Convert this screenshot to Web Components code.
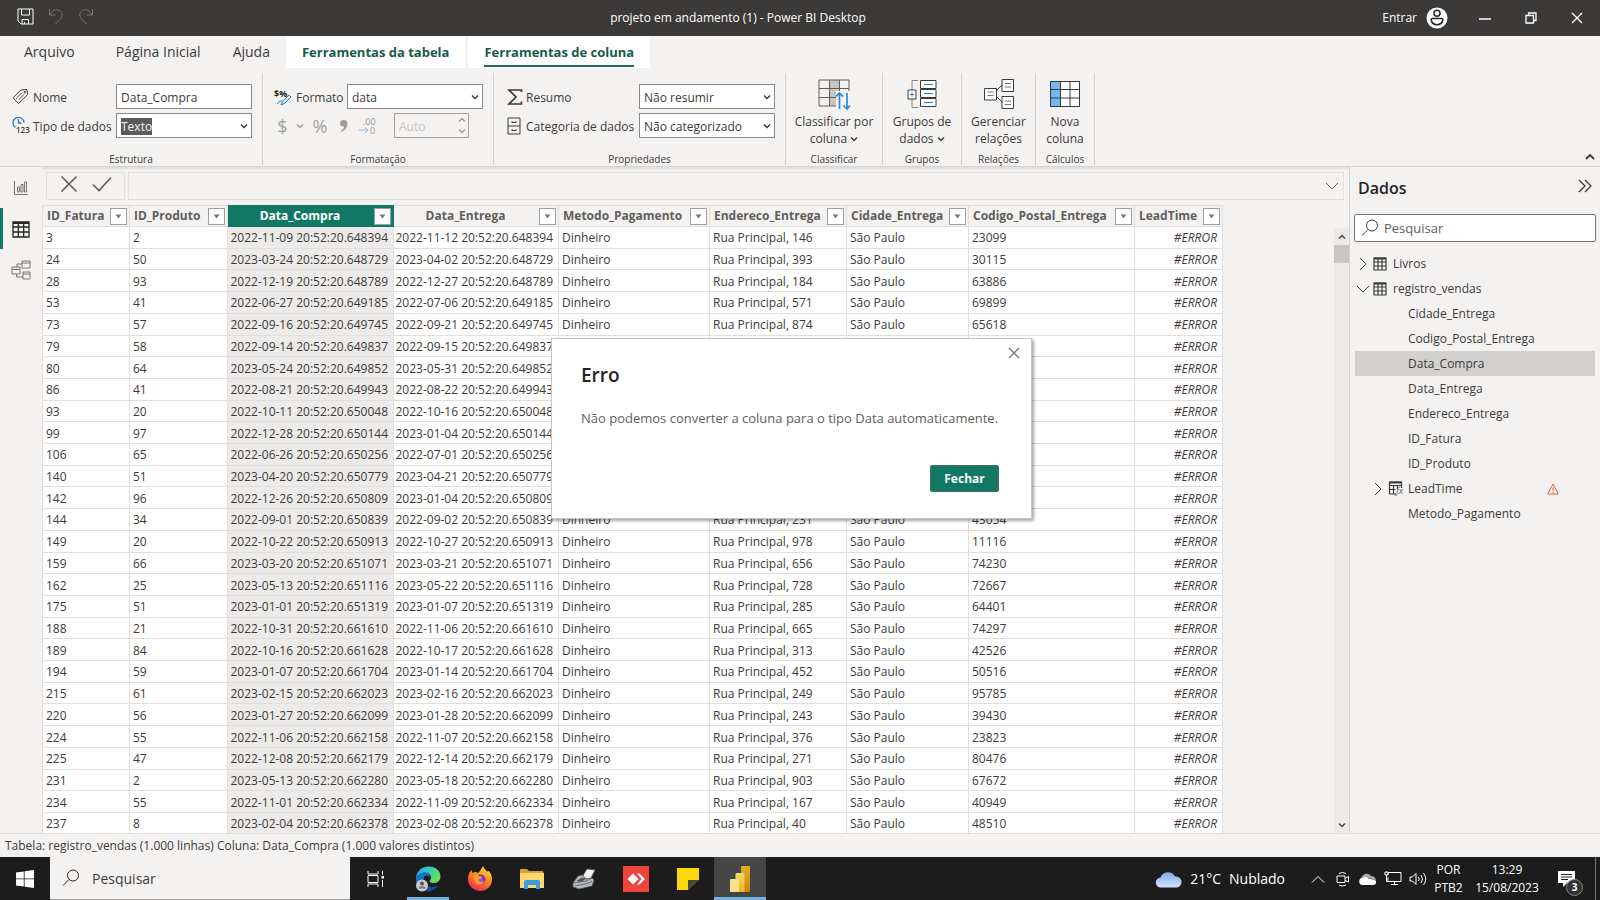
<!DOCTYPE html>
<html lang="pt-BR">
<head>
<meta charset="utf-8">
<meta name="viewport" content="width=device-width, initial-scale=1">
<title>projeto em andamento (1) - Power BI Desktop</title>
<style>
html, body { height: 100%; margin: 0; }
body {
  font: 12px/16px "Open Sans", "Noto Sans", sans-serif;
  color: #3b3a39; background: #f3f2f1; overflow: hidden;
  --green: #117865; --line: #e1dfdd; --field: #8a8886;
}
</style>
</head>
<body>
<desktop-screen></desktop-screen>
<script>
const RESET = `
*, *::before, *::after { box-sizing: border-box; }
button, input, select { font: inherit; color: inherit; margin: 0; }
button { background: none; border: 0; padding: 0; }
input:focus, select:focus, button:focus { outline: none; }
`;

function define(tag, css, html, setup) {
  const tpl = document.createElement('template');
  tpl.innerHTML = `<style>${RESET}${css}</style>${html}`;
  customElements.define(tag, class extends HTMLElement {
    constructor() {
      super();
      this.attachShadow({ mode: 'open' }).appendChild(tpl.content.cloneNode(true));
    }
    connectedCallback() {
      if (setup && !this.ready) { this.ready = true; setup(this, this.shadowRoot); }
    }
  });
}

/* name: [width, height, drawing] */
const ICONS = {
  save: [17, 17, '<path d="M1 1h15v15H4l-3-3zM4.500 1v6h8V1M5 16v-4.500h6.500V16M7.500 16v-2"/>'],
  undo: [16, 17, '<path d="M1.500 1v6h6M1.500 7C4 2.500 8 .5 11.500 2.500c4 2.500 3 6.500.5 9L7.500 16"/>'],
  redo: [16, 17, '<path d="M14.500 1v6h-6M14.500 7C12 2.500 8 .5 4.500 2.500c-4 2.500-3 6.500-.5 9L8.500 16"/>'],
  avatar: [22, 22, '<circle cx="11" cy="11" r="10.500" fill="#fff" stroke="none"/><g stroke="#252423" stroke-width="1.500"><circle cx="11" cy="6.300" r="3"/><path d="M6.500 11.500h9q1.500 0 1.300 1.500c-.6 3-2.800 4.700-5.800 4.700S5.800 16 5.200 13q-.2-1.500 1.300-1.500z"/></g>'],
  min: [12, 12, '<path d="M0 7h12" stroke-width="1.500"/>'],
  restore: [12, 12, '<path d="M1 3.500h7.500V11H1zM3.500 3.500V1H11v7.500H8.500" stroke-width="1.300"/>'],
  close: [12, 12, '<path d="M1 1l10 10M11 1L1 11" stroke-width="1.300"/>'],
  tag: [17, 17, '<path d="M1 9.800 8.800 2 15 1.500l.5 5.300L6.500 15.500z"/><circle cx="12.800" cy="4.200" r=".8"/><path d="M5 9.500 9.500 5M7 11.500 12 6.500M4 11l1-1" stroke-width=".9"/>'],
  datatype: [19, 20, '<g stroke="#2b7cc0" stroke-width="1.300"><path d="M3.500 11.500A5.500 5.500 0 1 1 12 6.500M6.500 3v4h3"/></g><text x="4" y="17" font-size="8" font-weight="600" fill="#3b3a39" stroke="none">123</text>'],
  format: [19, 18, '<text x="0" y="9" font-size="9" font-weight="700" fill="#252423" stroke="none">$%</text><path d="M7 17l1.500-4L15 7l2 2-6.500 6.500z" fill="#cfe6f8" stroke="#2b7cc0"/><path d="M3 16c2-3 3-3 5-3" stroke="#2b7cc0"/>'],
  comma: [10, 14, '<path d="M4.500 1a3.300 3.300 0 0 1 4 3.500c0 4-2.500 7-6 8.500l-.5-1.200c2-1.200 3-2.500 3-4.300C2.500 8 1 6.500 1 4.500A3.500 3.500 0 0 1 4.500 1z" fill="currentColor" stroke="none"/>'],
  decimals: [20, 20, '<text x="5" y="9" font-size="9" fill="#979593" stroke="none">.00</text><text x="12" y="18" font-size="9" fill="#979593" stroke="none">0</text><path d="M1 14h9M7 11.500 10 14l-3 2.500" stroke="#8bb8de"/>'],
  sigma: [16, 18, '<path d="M14.500 4V2H2l7 7-7 7h12.500v-2.500" stroke-width="1.700"/>'],
  category: [14, 18, '<path d="M1 1h12v16H1zM1 9h12M5 4v1.500h4V4M5 12v1.500h4V12"/>'],
  classify: [32, 32, '<path d="M12 2h10v26H12z" fill="#c8c6c4" stroke="none"/><path d="M1 2h30v26H1zM1 10.500h30M1 19.500h30M11.500 2v26M21.500 2v26" fill="none" stroke="#605e5c"/><path d="M18 13h14v19H18z" fill="#f3f2f1" stroke="none"/><path d="M21.500 31V15M18 18.500l3.500-3.500 3.500 3.500M29 15v16M25.500 27.500 29 31l3-3.500" stroke="#2b88d8" stroke-width="1.700"/>'],
  groups: [32, 32, '<path d="M12 2.500H6V12M6 20v9.500h6" stroke="#8a8886"/><path d="M2 12h8v9H2zM14.500 2.500H30v8H14.500zM14.500 11.500H30v8H14.500zM14.500 20.500H30v8H14.500z" fill="#fff"/><path d="M4 16.500h4M6 14.500v4M18 6.500h9M18 15.500h9M18 24.500h9" stroke="#2b7cc0"/>'],
  relations: [32, 32, '<path d="M13 13l6-6M13 18l6 6"/><path d="M1.500 10.500h12v11.500h-12zM19 1.500h11.500v12H19zM19 18.500h11.500v12H19z" fill="#fff"/><path d="M4.500 14h6M4.500 17.500h6M22 5.500h6M22 9h6M22 23h6M22 26.500h6" stroke="#797775"/>'],
  newcol: [32, 32, '<path d="M1.500 3.500h29v25h-29z" fill="#fff"/><path d="M2 4h9v24H2z" fill="#71b8f5" stroke="none"/><path d="M1.500 3.500h29v25h-29zM1.500 11.500h29M1.500 20h29M11.500 3.500v25M21 3.500v25"/>'],
  down: [8, 8, '<path d="M1 2.500l3 3 3-3" stroke-width="1.500"/>'],
  up: [8, 8, '<path d="M1 5.500l3-3 3 3" stroke-width="1.500"/>'],
  collapse: [10, 10, '<path d="M1 7l4-4 4 4" stroke-width="1.800"/>'],
  chart: [16, 16, '<path d="M1.500 1v13.500H15M4.500 12V7h2v5zM8 12V4.500h2V12zM11.500 12V2h2v10z"/>'],
  grid: [18, 18, '<path d="M1 2h16v15H1zM1 7h16M1 12h16M6.300 3.500V17M11.700 3.500V17" stroke-width="1.300"/><path d="M1 3h16" stroke-width="2"/>'],
  model: [20, 20, '<path d="M11 1h8v7h-8zM1 7h8v7H1zM12 12h7v7h-7zM11 3h8M1 9.500h8M12 14h7M6 7V4h5M5.500 14v3H12"/>'],
  cancel: [18, 18, '<path d="M1.500 1.500l15 15M16.500 1.500l-15 15" stroke-width="1.600"/>'],
  accept: [20, 16, '<path d="M1 8.500 7 14.500 19 1.500" stroke-width="1.600"/>'],
  wide: [14, 8, '<path d="M1 1l6 6 6-6"/>'],
  right: [8, 14, '<path d="M1 1l6 6-6 6"/>'],
  filter: [7, 5, '<path d="M.5.5h6l-3 4z" fill="currentColor" stroke="none"/>'],
  double: [14, 14, '<path d="M1 1l6 6-6 6M7 1l6 6-6 6" stroke-width="1.300"/>'],
  search: [18, 18, '<circle cx="11" cy="6.500" r="5.500"/><path d="M7 10.500 1 16.500"/>'],
  table: [14, 14, '<path d="M1 1h12v12H1zM1 5h12M1 9h12M5 2v11M9 2v11" stroke-width="1.200"/><path d="M1 1.500h12" stroke-width="2"/>'],
  calc: [17, 15, '<path d="M8 13H1.500V1h12v6M1.500 4.500h12M1.500 8.500h6M5.500 4v9M9.500 4v4" stroke-width="1.200"/><path d="M1.500 1.500h12" stroke-width="2"/><text x="8" y="13" font-size="9" font-style="italic" fill="#605e5c" stroke="none">fx</text>'],
  warn: [12, 12, '<path d="M6 1 11.300 11H.7zM6 4.500v3.500M6 9v1" stroke="#e0603f"/>'],
  windows: [18, 18, '<path d="M0 2.500 7.800 1.400v7.100H0zM8.600 1.300 18 0v8.500H8.600zM0 9.300h7.800v7.300L0 15.500zM8.600 9.300H18V18l-9.400-1.300z" fill="#fff" stroke="none"/>'],
  taskview: [18, 18, '<path d="M1 1v3h10V1M1 5.500h10v7H1zM1 17v-3h10v3M15.500 1v4M15.500 10v7"/><path d="M14.500 6h2.500v2.500h-2.500z" fill="#fff" stroke="none"/>'],
  edge: [26, 26, '<defs><linearGradient id="a" x1="0" y1="0" x2="1" y2=".5"><stop offset="0" stop-color="#2aa6e8"/><stop offset=".5" stop-color="#2fc8c8"/><stop offset="1" stop-color="#6be04e"/></linearGradient><linearGradient id="b" x1="0" y1="0" x2=".6" y2="1"><stop offset="0" stop-color="#1b7fd8"/><stop offset="1" stop-color="#0d4a94"/></linearGradient></defs><g stroke="none"><path d="M1 13C1 6 6 .5 13.500.5S26 5.500 25.500 11c-.4 4-3.500 6-7 6-3 0-4.500-1-3.500-2.500 3-4.500-1-8-5-8-5 0-8 3.500-9 6.500z" fill="url(#a)"/><path d="M1 13c0-4 4-6.500 8.500-6.500 3.500 0 6 2 5.500 5-.2-1-1.500-2-3-2-3 0-4 3-3 6 1.500 5 7.500 7 14 4C21 23 17 25.800 12.500 25.500 5.500 25 1 20 1 13z" fill="url(#b)"/><circle cx="7" cy="19.500" r="6" fill="#c9c9cd"/><circle cx="7" cy="17.500" r="2" fill="#55565c"/><path d="M3.500 22.500q0-2.500 3.500-2.500t3.500 2.500z" fill="#77787e"/></g>'],
  firefox: [24, 25, '<defs><linearGradient id="f" x1=".8" y1="0" x2=".3" y2="1"><stop offset="0" stop-color="#ffe23e"/><stop offset=".45" stop-color="#ff8a1e"/><stop offset="1" stop-color="#f0265e"/></linearGradient><radialGradient id="p"><stop offset="0" stop-color="#9c5cf0"/><stop offset="1" stop-color="#6a2fc0"/></radialGradient></defs><g stroke="none"><path d="M15 0c1 3 3 4 4 5.500L21 5c2.500 3 3 6 3 8.500C24 20 19 25 12.500 25S0 20 0 13.500C0 10 1 6.500 3.500 4l.8 3L7 6c1 0 2.500.5 3 1 2-1.500 3-4 5-7z" fill="url(#f)"/><circle cx="12.500" cy="13.500" r="5" fill="url(#p)"/><path d="M5 10c2-2 4-1.500 6 0 2.500 0 3.500 1 2.500 2-1 .8-2.500.5-3 2 1 2.500 4 2.500 6 .5-1 4-5 5-8 3C6 16 5 13 5 10z" fill="#ff9b1f"/></g>'],
  folder: [24, 22, '<g stroke="none"><path d="M0 1.500Q0 1 1 1h6l2 2h13q1.500 0 1.500 1.500V20H0z" fill="#dfa32c"/><path d="M0 5h24v15H0z" fill="#ffd76e"/><path d="M4 21v-7q0-2 2-2h12q2 0 2 2v7h-4v-4H8v4z" fill="#3f9be0"/></g>'],
  printer: [24, 22, '<g stroke="#55585c" stroke-width=".8"><path d="M10 9 15 1l8 1-5 10z" fill="#f2f3f5"/><path d="M1 15 6 8l5-1 2 4 7-1 2 2-2 6-13 3-6-2z" fill="#b4b8bd"/><path d="M1 15l13-2 6-3M3 18l12-2.500 5-2" fill="none"/><path d="M5 13l5-3 3 1-4 2.500z" fill="#4c5156"/></g>'],
  anydesk: [26, 26, '<g stroke="none"><path d="M0 0h26v26H0z" fill="#ef443b"/><path d="M10 7.500 15.500 13 10 18.500 4.500 13z" fill="#fff"/><path d="M14 7.500h2.500L22 13l-5.500 5.500H14l4.500-5.500z" fill="#fff"/></g>'],
  sticky: [24, 24, '<g stroke="none"><path d="M1 1h22v12L12 23H1z" fill="#ffd60a"/><path d="M12 23h11V13z" fill="#1c1c1c"/><path d="M12 13h11L12 23z" fill="#4a4536"/></g>'],
  powerbi: [20, 26, '<defs><linearGradient id="q" x1="0" y1="0" x2="0" y2="1"><stop offset="0" stop-color="#e8ad22"/><stop offset="1" stop-color="#c98408"/></linearGradient><linearGradient id="r" x1="0" y1="0" x2="0" y2="1"><stop offset="0" stop-color="#f8d866"/><stop offset="1" stop-color="#eab52e"/></linearGradient></defs><g stroke="none"><rect x="11" width="9" height="26" rx="1" fill="url(#q)"/><rect x="5.500" y="7" width="9" height="19" rx="1" fill="url(#r)"/><rect y="13" width="9" height="13" rx="1" fill="#fae08a"/></g>'],
  weather: [26, 17, '<defs><linearGradient id="w" x1="0" y1="0" x2="0" y2="1"><stop offset="0" stop-color="#7fa9ee"/><stop offset="1" stop-color="#d6e3fa"/></linearGradient></defs><path d="M5 16.500a5 5 0 0 1-.5-10A8 8 0 0 1 19 5.500a5.500 5.500 0 0 1 2 11z" fill="url(#w)" stroke="none"/>'],
  tray: [14, 8, '<path d="M1 7.500l6-6 6 6"/>'],
  meet: [14, 16, '<path d="M1 5h8v6.500H1zM9 7.500l3.500-2v5.500L9 9.500M3 2.500q3-2 7 0M3 14q3 2 7 0"/>'],
  cloud: [18, 12, '<g stroke="none"><path d="M1 8C3 0 9-1 12 3q4 0 5 4L9 5z" fill="#a8a8a8"/><path d="M4 12a3.500 3.500 0 0 1-.5-7Q6 3 9.500 5.500L16 7a2.800 2.800 0 0 1-1 5z" fill="#fff"/></g>'],
  network: [18, 15, '<path d="M4 3.500V1.500h13v9H4V6.500M10.500 10.500v3M7 13.500h7M1 1h3v3H1zM2.500 4v6.500H4"/>'],
  sound: [18, 14, '<path d="M1 5v4h2.500L7 12.500v-11L3.500 5zM9.500 5q1.500 2 0 4M12 3q3 4 0 8M14.500 1q4.500 6 0 12"/>'],
  note: [18, 18, '<path d="M0 1h17v12H9l-4 4v-4H0z" fill="#fff" stroke="none"/><path d="M3 4.500h11M3 7h11M3 9.500h7" stroke="#1c1c1c"/>'],
};
define('ui-icon', ':host { display: inline-flex; flex: none; } svg { display: block; overflow: visible; }', '', (el, root) => {
  const [w, h, body] = ICONS[el.getAttribute('name')];
  const box = document.createElement('template');
  box.innerHTML = `<svg width="${w}" height="${h}" viewBox="0 0 ${w} ${h}" fill="none" stroke="currentColor" aria-hidden="true">${body}</svg>`;
  root.appendChild(box.content);
});

define('title-bar', `
:host { display: grid; grid-template-columns: 130px 1fr 254px; align-items: center; height: 36px; background: #3b3a39; color: #fff; }
.quick { display: flex; gap: 14px; padding-left: 17px; align-items: center; }
.quick button:disabled { color: #797775; }
h1 { margin: 0; font-size: 12px; font-weight: 400; text-align: center; }
.right { display: flex; justify-content: flex-end; align-items: center; height: 36px; }
.login { display: flex; align-items: center; gap: 9px; margin-right: 14px; }
.win { width: 46px; height: 36px; display: grid; place-items: center; }
`, `
<div class="quick">
  <button aria-label="Salvar"><ui-icon name="save"></ui-icon></button>
  <button aria-label="Desfazer" disabled><ui-icon name="undo"></ui-icon></button>
  <button aria-label="Refazer" disabled><ui-icon name="redo"></ui-icon></button>
</div>
<h1>projeto em andamento (1) - Power BI Desktop</h1>
<div class="right">
  <button class="login">Entrar <ui-icon name="avatar"></ui-icon></button>
  <button class="win" aria-label="Minimizar"><ui-icon name="min"></ui-icon></button>
  <button class="win" aria-label="Restaurar"><ui-icon name="restore"></ui-icon></button>
  <button class="win" aria-label="Fechar janela"><ui-icon name="close"></ui-icon></button>
</div>`);

define('ribbon-tabs', `
:host { display: block; }
nav { display: flex; height: 32px; padding-left: 8px; }
button { padding: 0 16px; font-size: 14px; }
.first { margin-right: 9px; }
.context { background: #fff; font-size: 13px; font-weight: 700; color: #185a4d; display: grid; }
.context + .context { margin-left: 3px; }
.context span { align-self: stretch; line-height: 32px; height: 31px; border-bottom: 2px solid transparent; }
.active span { border-color: #1f6b5c; }
`, `
<nav>
  <button class="first">Arquivo</button><button>Página Inicial</button><button>Ajuda</button>
  <button class="context"><span>Ferramentas da tabela</span></button>
  <button class="context active"><span>Ferramentas de coluna</span></button>
</nav>`);

define('ribbon-group', `
:host { display: flex; flex-direction: column; margin: 5px 0 1px; border-right: 1px solid #d2d0ce; }
.body { flex: 1; }
.label { font-size: 10px; line-height: 12px; text-align: center; }
`, `<div class="body"><slot></slot></div><div class="label"></div>`, (el, root) => {
  root.querySelector('.label').textContent = el.getAttribute('label');
});

define('ribbon-command', `
:host { display: block; padding-top: 5px; }
button { display: flex; flex-direction: column; align-items: center; gap: 3px; width: 100%; line-height: 17px; white-space: nowrap; }
`, `<button><slot name="icon"></slot><span><slot></slot></span></button>`);

define('column-ribbon', `
:host { display: flex; height: 99px; position: relative; border-bottom: 1px solid #d6d4d2; }
.fields { display: grid; row-gap: 4px; grid-auto-rows: 25px; align-items: center; padding-top: 11px; padding-right: 10px; white-space: nowrap; }
.one { grid-template-columns: 21px 83px 136px; padding-left: 12px; }
.two { grid-template-columns: 22px 51px 136px; padding-left: 11px; }
.three { grid-template-columns: 19px 113px 136px; padding-left: 13px; }
label { padding-top: 2px; }
input, select { width: 100%; height: 25px; border: 1px solid var(--field); border-radius: 0; background: #fff; padding: 2px 4px 0; appearance: none; }
.pick { position: relative; }
.pick ui-icon { position: absolute; right: 4px; top: 9px; }
.marked { color: #f3f2f1; background: linear-gradient(#5c5a58, #5c5a58) 4px 4px / 31px 17px no-repeat #fff; }
.marked option { color: #252423; }
.formats { grid-column: 1 / -1; display: flex; align-items: center; color: #a19f9d; }
.formats button { width: 24px; height: 25px; display: grid; place-items: center; color: #a19f9d; font-size: 18px; }
.formats .narrow { width: 17px; }
.spin { position: relative; width: 75px; margin-left: 14px; }
.spin input { background: none; border-color: #a19f9d; }
.spin input::placeholder { color: #c8c6c4; opacity: 1; }
.spin span { position: absolute; right: 3px; top: 3px; display: grid; gap: 3px; }
.classify { width: 97px; } .groups { width: 79px; } .relations { width: 74px; } .calc { width: 59px; }
.collapse { position: absolute; right: 5px; bottom: 0; }
`, `
<ribbon-group label="Estrutura"><div class="fields one">
  <ui-icon name="tag"></ui-icon><label for="name">Nome</label><input id="name" value="Data_Compra">
  <ui-icon name="datatype"></ui-icon><label for="type">Tipo de dados</label>
  <span class="pick"><select id="type" class="marked"><option>Texto</option></select><ui-icon name="down"></ui-icon></span>
</div></ribbon-group>
<ribbon-group label="Formatação"><div class="fields two">
  <ui-icon name="format"></ui-icon><label for="format">Formato</label>
  <span class="pick"><select id="format"><option>data</option></select><ui-icon name="down"></ui-icon></span>
  <div class="formats">
    <button class="narrow" disabled>$</button><button class="narrow" disabled aria-label="Moedas"><ui-icon name="down"></ui-icon></button>
    <button disabled>%</button><button disabled aria-label="Separador de milhar"><ui-icon name="comma"></ui-icon></button>
    <button disabled aria-label="Casas decimais"><ui-icon name="decimals"></ui-icon></button>
    <span class="spin"><input aria-label="Casas decimais" placeholder="Auto" disabled><span><ui-icon name="up"></ui-icon><ui-icon name="down"></ui-icon></span></span>
  </div>
</div></ribbon-group>
<ribbon-group label="Propriedades"><div class="fields three">
  <ui-icon name="sigma"></ui-icon><label for="sum">Resumo</label>
  <span class="pick"><select id="sum"><option>Não resumir</option></select><ui-icon name="down"></ui-icon></span>
  <ui-icon name="category"></ui-icon><label for="cat">Categoria de dados</label>
  <span class="pick"><select id="cat"><option>Não categorizado</option></select><ui-icon name="down"></ui-icon></span>
</div></ribbon-group>
<ribbon-group class="classify" label="Classificar"><ribbon-command><ui-icon slot="icon" name="classify"></ui-icon>Classificar por<br>coluna <ui-icon name="down"></ui-icon></ribbon-command></ribbon-group>
<ribbon-group class="groups" label="Grupos"><ribbon-command><ui-icon slot="icon" name="groups"></ui-icon>Grupos de<br>dados <ui-icon name="down"></ui-icon></ribbon-command></ribbon-group>
<ribbon-group class="relations" label="Relações"><ribbon-command><ui-icon slot="icon" name="relations"></ui-icon>Gerenciar<br>relações</ribbon-command></ribbon-group>
<ribbon-group class="calc" label="Cálculos"><ribbon-command><ui-icon slot="icon" name="newcol"></ui-icon>Nova<br>coluna</ribbon-command></ribbon-group>
<button class="collapse" aria-label="Recolher faixa"><ui-icon name="collapse"></ui-icon></button>`);

define('view-rail', `
:host { display: flex; flex-direction: column; width: 42px; }
button { height: 41px; display: grid; place-items: center; color: #797775; border-left: 3px solid transparent; padding-right: 3px; }
.active { border-color: var(--green); color: #252423; }
`, `
<button aria-label="Relatório"><ui-icon name="chart"></ui-icon></button>
<button class="active" aria-label="Dados"><ui-icon name="grid"></ui-icon></button>
<button aria-label="Modelo"><ui-icon name="model"></ui-icon></button>`);

define('formula-bar', `
:host { display: flex; gap: 3px; height: 38px; padding: 5px 5px 5px 4px; color: #605e5c; }
div { border: 1px solid var(--line); display: flex; align-items: center; }
.actions { width: 79px; gap: 14px; padding-left: 13px; }
.formula { flex: 1; padding-right: 4px; }
input { flex: 1; border: 0; background: none; height: 25px; }
`, `
<div class="actions"><button aria-label="Cancelar"><ui-icon name="cancel"></ui-icon></button><button aria-label="Confirmar"><ui-icon name="accept"></ui-icon></button></div>
<div class="formula"><input aria-label="Fórmula"><button aria-label="Expandir"><ui-icon name="wide"></ui-icon></button></div>`);

const COLUMNS = [['ID_Fatura', 87], ['ID_Produto', 98], ['Data_Compra', 166], ['Data_Entrega', 165], ['Metodo_Pagamento', 151],
  ['Endereco_Entrega', 137], ['Cidade_Entrega', 122], ['Codigo_Postal_Entrega', 166], ['LeadTime', 88]];
/* invoice, product, purchase day, delivery day, microseconds, street number, postal code */
const ROWS = `3 2 2022-11-09 2022-11-12 648394 146 23099
24 50 2023-03-24 2023-04-02 648729 393 30115
28 93 2022-12-19 2022-12-27 648789 184 63886
53 41 2022-06-27 2022-07-06 649185 571 69899
73 57 2022-09-16 2022-09-21 649745 874 65618
79 58 2022-09-14 2022-09-15 649837
80 64 2023-05-24 2023-05-31 649852
86 41 2022-08-21 2022-08-22 649943
93 20 2022-10-11 2022-10-16 650048
99 97 2022-12-28 2023-01-04 650144
106 65 2022-06-26 2022-07-01 650256
140 51 2023-04-20 2023-04-21 650779
142 96 2022-12-26 2023-01-04 650809
144 34 2022-09-01 2022-09-02 650839 231 43054
149 20 2022-10-22 2022-10-27 650913 978 11116
159 66 2023-03-20 2023-03-21 651071 656 74230
162 25 2023-05-13 2023-05-22 651116 728 72667
175 51 2023-01-01 2023-01-07 651319 285 64401
188 21 2022-10-31 2022-11-06 661610 665 74297
189 84 2022-10-16 2022-10-17 661628 313 42526
194 59 2023-01-07 2023-01-14 661704 452 50516
215 61 2023-02-15 2023-02-16 662023 249 95785
220 56 2023-01-27 2023-01-28 662099 243 39430
224 55 2022-11-06 2022-11-07 662158 376 23823
225 47 2022-12-08 2022-12-14 662179 271 80476
231 2 2023-05-13 2023-05-18 662280 903 67672
234 55 2022-11-01 2022-11-09 662334 167 40949
237 8 2023-02-04 2023-02-08 662378 40 48510`.split('\n').map(r => r.split(' '));

define('data-grid', `
:host { display: flex; justify-content: space-between; flex: 1; min-height: 0; overflow: hidden; }
table { height: calc(100% + 2px); table-layout: fixed; border-collapse: separate; border-spacing: 0; border-left: 1px solid var(--line); line-height: 16px; }
th, td { border-right: 1px solid var(--line); border-bottom: 1px solid var(--line); white-space: nowrap; text-align: left; }
th { height: 22px; border-top: 1px solid var(--line); background: #f3f2f1; color: #605e5c; padding: 0 2px 0 4px; }
th div { display: flex; align-items: center; justify-content: space-between; }
th button { width: 17px; height: 17px; border: 1px solid #a19f9d; background: #fff; color: #797775; display: grid; place-items: center; }
td { background: #fff; padding: 2px 3px 0; }
th.date span { flex: 1; text-align: center; margin-right: 6px; }
th.on { background: var(--green); border-color: var(--green); color: #fff; }
td.date { text-align: right; padding: 2px 5px 0 0; }
td.on { background: #edebe9; }
td.err { text-align: right; font-style: italic; padding-right: 5px; }
.scroll { width: 15px; margin-top: 23px; background: #ebeae9; display: flex; flex-direction: column; align-items: center; color: #484644; }
.scroll::before { content: ""; order: 1; width: 15px; height: 18px; background: #c8c6c4; }
.scroll ui-icon { height: 17px; align-items: center; }
.scroll ui-icon:last-child { order: 2; margin-top: auto; }
`, `
<table><colgroup></colgroup><thead><tr></tr></thead><tbody></tbody></table>
<div class="scroll" aria-hidden="true"><ui-icon name="up"></ui-icon><ui-icon name="down"></ui-icon></div>`, (el, root) => {
  const kind = i => i === 2 ? 'date on' : i === 3 ? 'date' : i === 8 ? 'err' : '';
  const cell = (v, i) => `<td class="${kind(i)}">${v}</td>`;
  root.querySelector('table').style.width = COLUMNS.reduce((s, c) => s + c[1], 1) + 'px';
  root.querySelector('colgroup').innerHTML = COLUMNS.map(c => `<col style="width:${c[1]}px">`).join('');
  root.querySelector('thead tr').innerHTML = COLUMNS.map(([n], i) =>
    `<th scope="col" class="${kind(i)}"><div><span>${n}</span><button aria-label="Filtrar ${n}"><ui-icon name="filter"></ui-icon></button></div></th>`).join('');
  root.querySelector('tbody').innerHTML = ROWS.map(([id, product, bought, sent, us, street, zip]) => '<tr>' + [
    id, product, `${bought} 20:52:20.${us}`, `${sent} 20:52:20.${us}`, zip ? 'Dinheiro' : '',
    street ? `Rua Principal, ${street}` : '', zip ? 'São Paulo' : '', zip || '', '#ERROR'].map(cell).join('') + '</tr>').join('');
});

define('tree-row', `
:host { display: block; }
button { display: flex; align-items: center; width: 100%; height: 25px; padding-left: 1px; text-align: left; }
.arrow { width: 14px; margin-right: 3px; display: grid; place-items: center; }
.kind { width: 20px; display: flex; }
:host([level="1"]) button { padding-left: 16px; }
:host([selected]) button { background: #d2d0ce; }
.end { margin-left: auto; margin-right: 36px; display: flex; }
`, `<button><span class="arrow"><slot name="arrow"></slot></span><span class="kind"><slot name="kind"></slot></span><slot></slot><span class="end"><slot name="end"></slot></span></button>`);

define('field-pane', `
:host { display: block; width: 251px; border-left: 1px solid #d2d0ce; }
header { display: flex; align-items: center; justify-content: space-between; height: 47px; padding: 0 8px 5px 8px; }
h2 { margin: 0; font-size: 16px; font-weight: 600; line-height: 22px; color: #252423; }
label { display: flex; align-items: center; gap: 5px; height: 28px; margin: 0 4px; padding-left: 6px; border: 1px solid #797775; border-radius: 2px; background: #fff; }
input { flex: 1; min-width: 0; border: 0; padding: 0; font-size: 13px; background: none; }
input::placeholder { color: #605e5c; opacity: 1; }
.tree { padding: 9px 5px; }
`, `
<header><h2>Dados</h2><button aria-label="Recolher painel"><ui-icon name="double"></ui-icon></button></header>
<label><ui-icon name="search"></ui-icon><input aria-label="Pesquisar" placeholder="Pesquisar"></label>
<div class="tree">
  <tree-row><ui-icon slot="arrow" name="right"></ui-icon><ui-icon slot="kind" name="table"></ui-icon>Livros</tree-row>
  <tree-row><ui-icon slot="arrow" name="wide"></ui-icon><ui-icon slot="kind" name="table"></ui-icon>registro_vendas</tree-row>
  <tree-row level="1">Cidade_Entrega</tree-row>
  <tree-row level="1">Codigo_Postal_Entrega</tree-row>
  <tree-row level="1" selected>Data_Compra</tree-row>
  <tree-row level="1">Data_Entrega</tree-row>
  <tree-row level="1">Endereco_Entrega</tree-row>
  <tree-row level="1">ID_Fatura</tree-row>
  <tree-row level="1">ID_Produto</tree-row>
  <tree-row level="1"><ui-icon slot="arrow" name="right"></ui-icon><ui-icon slot="kind" name="calc"></ui-icon>LeadTime<ui-icon slot="end" name="warn"></ui-icon></tree-row>
  <tree-row level="1">Metodo_Pagamento</tree-row>
</div>`);

define('status-bar', `
:host { display: block; height: 24px; padding: 0 5px; line-height: 24px; border-top: 1px solid var(--line); }
`, `<slot></slot>`);

define('error-dialog', `
:host { position: absolute; left: calc(50% - 249px); top: calc(50% - 112px); width: 481px; }
dialog { position: relative; display: block; width: 100%; margin: 0; padding: 23px 32px 26px 29px; border: 1px solid #c8c6c4; background: #fff; color: #3b3a39; box-shadow: 2px 2px 3px rgba(0, 0, 0, .35); }
h2 { margin: 0 0 20px; font-size: 19px; line-height: 26px; font-weight: 600; color: #252423; }
p { margin: 0 0 37px; font-size: 13px; line-height: 20px; color: #605e5c; white-space: nowrap; }
footer { display: flex; justify-content: flex-end; }
footer button { width: 69px; height: 27px; border-radius: 2px; background: var(--green); border: 1px solid #4b6b63; color: #fff; font-weight: 700; }
.x { position: absolute; right: 11px; top: 8px; color: #797775; }
`, `
<dialog open aria-labelledby="t">
  <button class="x" aria-label="Fechar"><ui-icon name="close"></ui-icon></button>
  <h2 id="t">Erro</h2>
  <p>Não podemos converter a coluna para o tipo Data automaticamente.</p>
  <footer><button>Fechar</button></footer>
</dialog>`);

define('task-bar', `
:host { display: flex; height: 43px; background: #1c1c1c; color: #fff; }
button { display: grid; place-items: center; }
.start { width: 50px; padding-right: 1px; }
label { display: flex; align-items: center; gap: 12px; width: 300px; padding-left: 12px; background: #f3f2f1; color: #252423; border-bottom: 1px solid #a19f9d; }
input { flex: 1; min-width: 0; border: 0; padding: 2px 0 0; font-size: 14px; background: none; }
input::placeholder { color: #3b3a39; opacity: 1; }
.app { width: 52px; position: relative; }
.run::after { content: ""; position: absolute; left: 5px; right: 5px; bottom: 0; height: 3px; background: #76b0e4; }
.active { background: #454545; }
.active::after { left: 0; right: 0; }
.tray { margin-left: auto; display: flex; margin-right: 4px; border-right: 1px solid #797775; }
.weather { display: flex; align-items: center; gap: 8px; font-size: 14px; margin-right: 20px; padding-top: 1px; }
.small { width: 25px; }
.lang { width: 37px; line-height: 18px; }
.clock { width: 80px; line-height: 18px; }
.note { width: 48px; position: relative; padding-right: 8px; }
.badge { position: absolute; left: 19px; top: 22px; width: 17px; height: 17px; border: 1px solid #8a8886; border-radius: 50%; background: #333; font-size: 10px; line-height: 15px; text-align: center; font-weight: 700; }
`, `
<button class="start" aria-label="Iniciar"><ui-icon name="windows"></ui-icon></button>
<label><ui-icon name="search"></ui-icon><input aria-label="Pesquisar" placeholder="Pesquisar"></label>
<button class="app" aria-label="Visão de tarefas"><ui-icon name="taskview"></ui-icon></button>
<button class="app run" aria-label="Edge"><ui-icon name="edge"></ui-icon></button>
<button class="app" aria-label="Firefox"><ui-icon name="firefox"></ui-icon></button>
<button class="app" aria-label="Explorador de arquivos"><ui-icon name="folder"></ui-icon></button>
<button class="app" aria-label="Impressora"><ui-icon name="printer"></ui-icon></button>
<button class="app" aria-label="AnyDesk"><ui-icon name="anydesk"></ui-icon></button>
<button class="app" aria-label="Notas"><ui-icon name="sticky"></ui-icon></button>
<button class="app run active" aria-label="Power BI"><ui-icon name="powerbi"></ui-icon></button>
<div class="tray">
  <button class="weather"><ui-icon name="weather"></ui-icon><span>21°C</span><span>Nublado</span></button>
  <button class="small" aria-label="Ícones ocultos"><ui-icon name="tray"></ui-icon></button>
  <button class="small" aria-label="Reunir"><ui-icon name="meet"></ui-icon></button>
  <button class="small" aria-label="OneDrive"><ui-icon name="cloud"></ui-icon></button>
  <button class="small" aria-label="Rede"><ui-icon name="network"></ui-icon></button>
  <button class="small" aria-label="Som"><ui-icon name="sound"></ui-icon></button>
  <button class="lang"><span>POR<br>PTB2</span></button>
  <button class="clock"><span>13:29<br>15/08/2023</span></button>
  <button class="note" aria-label="Notificações"><ui-icon name="note"></ui-icon><span class="badge">3</span></button>
</div>`);

define('desktop-screen', `
:host { display: flex; flex-direction: column; height: 100vh; position: relative; }
main { flex: 1; min-height: 0; display: flex; }
.work { flex: 1; min-width: 0; display: flex; flex-direction: column; box-shadow: inset 0 3px 2px -1px #e1dfdd; }
`, `
<title-bar></title-bar>
<ribbon-tabs></ribbon-tabs>
<column-ribbon></column-ribbon>
<main>
  <view-rail></view-rail>
  <div class="work"><formula-bar></formula-bar><data-grid></data-grid></div>
  <field-pane></field-pane>
</main>
<status-bar>Tabela: registro_vendas (1.000 linhas) Coluna: Data_Compra (1.000 valores distintos)</status-bar>
<task-bar></task-bar>
<error-dialog></error-dialog>`);
</script>
</body>
</html>
